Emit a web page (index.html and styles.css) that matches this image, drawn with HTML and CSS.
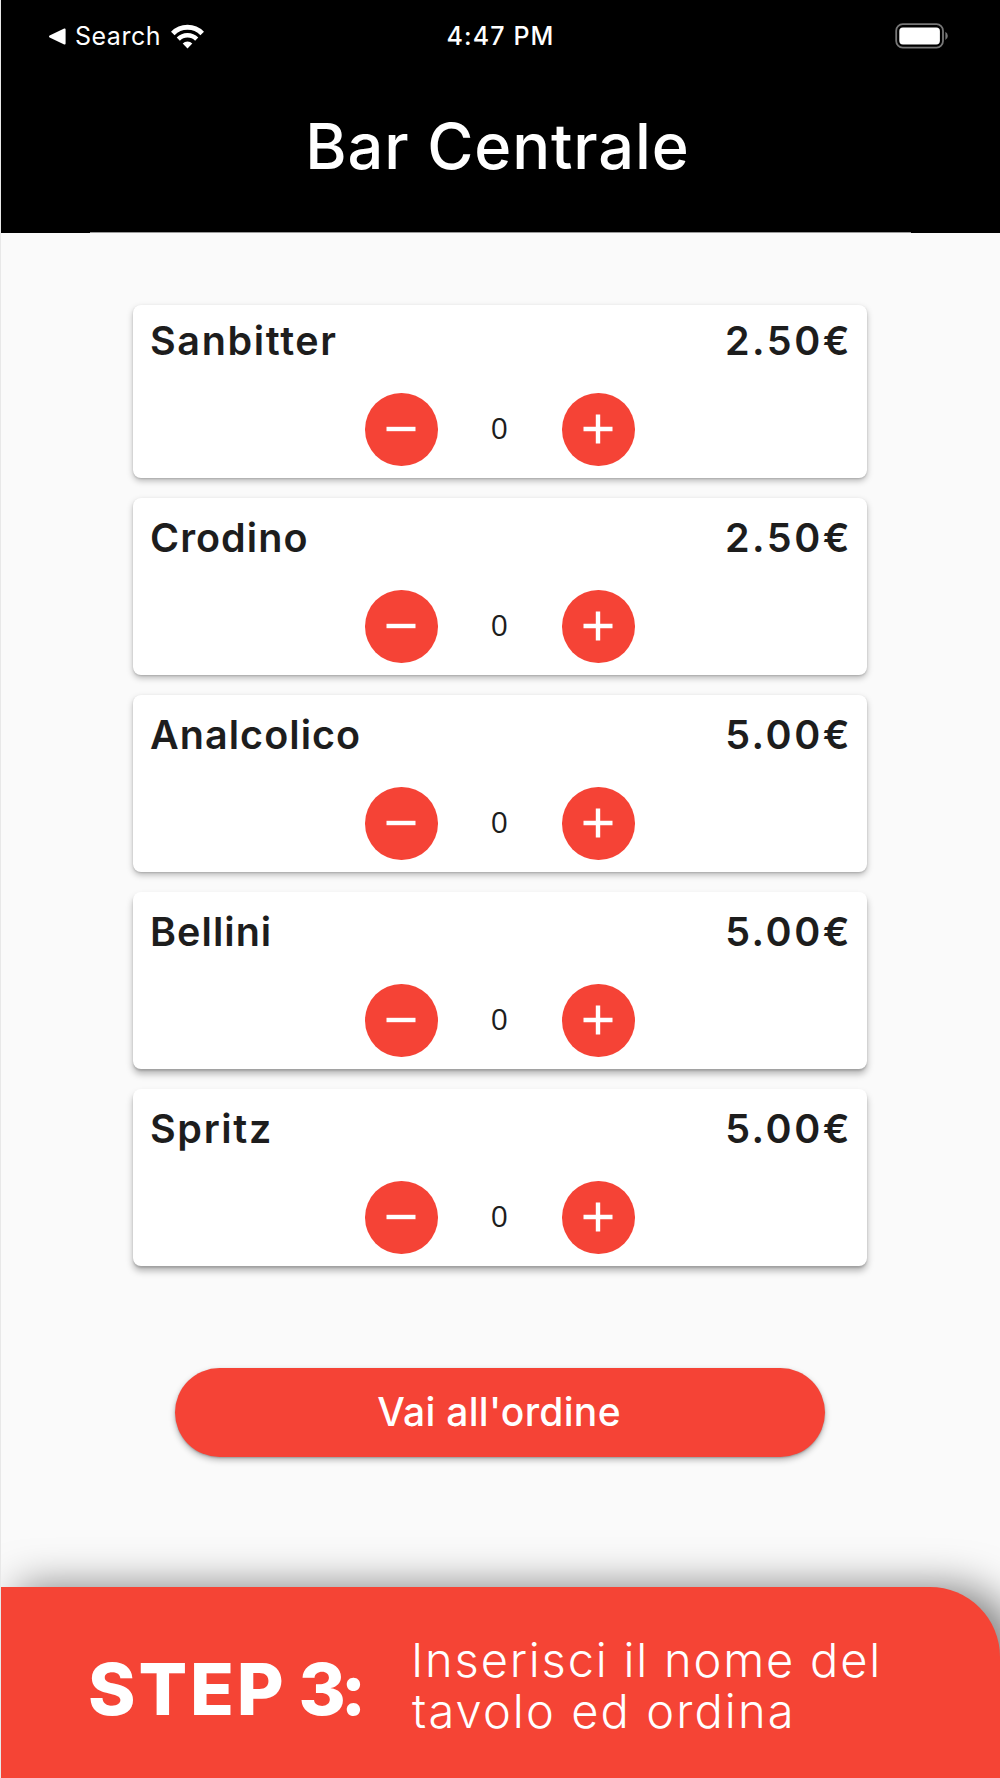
FILE: index.html
```
<!DOCTYPE html>
<html lang="it">
<head>
<meta charset="utf-8">
<title>Bar Centrale</title>
<link rel="stylesheet" href="styles.css">
</head>
<body>
<div class="screen">
  <header class="header">
    <div class="status">
      <div class="status-left">
        <svg class="back" viewBox="0 0 17 17"><path d="M.6 7.6 15.2.5Q16.6.1 16.6 1.5v14q0 1.4-1.4 1L.6 9.4q-1.2-.9 0-1.8z" fill="#fff"/></svg>
        <span class="search">Search</span>
        <svg class="wifi" viewBox="0 0 33 25" fill="none" stroke="#fff"><path d="M1.8 9.4a20.6 20.6 0 0 1 29.4 0" stroke-width="5"/><path d="M7.3 15.1a12.9 12.9 0 0 1 18.4 0" stroke-width="4.4"/><path d="M11.7 19.4a6.8 6.8 0 0 1 9.6 0L16.5 24.4z" fill="#fff" stroke="none"/></svg>
      </div>
      <span class="time">4:47 PM</span>
      <svg class="battery" viewBox="0 0 54 26"><rect x="1.2" y="1.2" width="46.8" height="23.4" rx="6.5" fill="none" stroke="#777" stroke-width="1.8"/><rect x="4.3" y="4.4" width="40.6" height="17" rx="3.6" fill="#fff"/><path d="M50.4 8.8q2.4 1.5 2.4 4.1t-2.4 4.1z" fill="#777"/></svg>
    </div>
    <h1 class="title">Bar Centrale</h1>
  </header>
  <main class="content">
    <ul class="menu">
      <li class="card card-first">
        <div class="card-row"><span class="name name-wide">Sanbitter</span><span class="price">2.50€</span></div>
        <div class="stepper"><button class="round"><svg viewBox="0 0 30 30"><path d="M.5 15h29"/></svg></button><span class="count">0</span><button class="round"><svg viewBox="0 0 30 30"><path d="M.5 15h29M15 .5v29"/></svg></button></div>
      </li>
      <li class="card">
        <div class="card-row"><span class="name">Crodino</span><span class="price">2.50€</span></div>
        <div class="stepper"><button class="round"><svg viewBox="0 0 30 30"><path d="M.5 15h29"/></svg></button><span class="count">0</span><button class="round"><svg viewBox="0 0 30 30"><path d="M.5 15h29M15 .5v29"/></svg></button></div>
      </li>
      <li class="card">
        <div class="card-row"><span class="name">Analcolico</span><span class="price">5.00€</span></div>
        <div class="stepper"><button class="round"><svg viewBox="0 0 30 30"><path d="M.5 15h29"/></svg></button><span class="count">0</span><button class="round"><svg viewBox="0 0 30 30"><path d="M.5 15h29M15 .5v29"/></svg></button></div>
      </li>
      <li class="card card-low">
        <div class="card-row"><span class="name">Bellini</span><span class="price">5.00€</span></div>
        <div class="stepper"><button class="round"><svg viewBox="0 0 30 30"><path d="M.5 15h29"/></svg></button><span class="count">0</span><button class="round"><svg viewBox="0 0 30 30"><path d="M.5 15h29M15 .5v29"/></svg></button></div>
      </li>
      <li class="card card-low">
        <div class="card-row"><span class="name name-wide">Spritz</span><span class="price">5.00€</span></div>
        <div class="stepper"><button class="round"><svg viewBox="0 0 30 30"><path d="M.5 15h29"/></svg></button><span class="count">0</span><button class="round"><svg viewBox="0 0 30 30"><path d="M.5 15h29M15 .5v29"/></svg></button></div>
      </li>
    </ul>
    <button class="order">Vai all'ordine</button>
  </main>
  <footer class="banner">
    <strong class="step"><span class="step-word">STEP</span> <span class="step-number">3:</span></strong>
    <p class="hint"><span class="hint-line">Inserisci il nome del</span> <span class="hint-line hint-end">tavolo ed ordina</span></p>
  </footer>
</div>
</body>
</html>
```
FILE: styles.css
```
* { box-sizing: border-box; }

body {
  margin: 0;
  background: #fafafa;
  color: #1d1d1d;
  font-family: Inter, "Liberation Sans", sans-serif;
}

button { border: 0; padding: 0; font: inherit; color: #fff; background: #f54336; }

.screen {
  display: flex;
  flex-direction: column;
  height: 1778px;
  border-left: 1px solid #e8e8e8;
  overflow: hidden;
}

.header {
  display: flex;
  flex-direction: column;
  flex: none;
  height: 233px;
  color: #fff;
  background: linear-gradient(#999, #999) 89px 100% / 821px 1px no-repeat #000;
}

.status {
  display: grid;
  grid-template-columns: 1fr auto 1fr;
  align-items: center;
  height: 72px;
  padding: 0 51px 0 48px;
  font-size: 25px;
}

.status-left { display: flex; align-items: center; }
.back { width: 17px; height: 17px; }
.search { margin-left: 9px; width: 96px; letter-spacing: .5px; }
.wifi { width: 33px; height: 25px; }
.time { font-weight: 500; letter-spacing: 1.1px; margin-left: 3px; }
.battery { width: 54px; height: 26px; justify-self: end; }

.title {
  margin: 0;
  padding-right: 6px;
  font-size: 63px;
  font-weight: 500;
  line-height: 148px;
  letter-spacing: .9px;
  text-align: center;
}

.content {
  display: flex;
  flex-direction: column;
  flex: none;
  height: 1354px;
  padding: 72px 132px 0;
}

.menu {
  display: flex;
  flex-direction: column;
  gap: 20.5px;
  margin: 0;
  padding: 0;
  list-style: none;
}

.card {
  display: flex;
  flex-direction: column;
  justify-content: flex-end;
  gap: 28px;
  width: 734px;
  height: 176.5px;
  padding: 0 15px 12px 17px;
  border-radius: 8px;
  background: #fff;
  box-shadow: 0 3px 6px rgba(0, 0, 0, .26), 0 1px 2px rgba(0, 0, 0, .14);
}

.card-first { height: 172.5px; }
.card-low { box-shadow: 0 5px 7px rgba(0, 0, 0, .28), 0 2px 2px rgba(0, 0, 0, .14); }

.card-row {
  display: flex;
  justify-content: space-between;
  font-size: 39.5px;
  font-weight: 600;
  line-height: 48px;
}

.name { letter-spacing: 1.05px; }
.name-wide { letter-spacing: 1.65px; }
.price { letter-spacing: 2.5px; }

.stepper { display: flex; align-items: center; padding-left: 215px; }

.round {
  display: flex;
  align-items: center;
  justify-content: center;
  width: 72.5px;
  height: 72.5px;
  border-radius: 50%;
}

.round svg { width: 30px; height: 30px; fill: none; stroke: #fff; stroke-width: 4.4; }

.count {
  width: 124.5px;
  padding: 0 1px 3px 0;
  font-size: 30px;
  font-weight: 400;
  font-family: "Open Sans", sans-serif;
  text-align: center;
}

.order {
  width: 650px;
  height: 89px;
  margin: 102px 0 0 42px;
  padding: 0 2px 1px 0;
  border-radius: 45px;
  font-size: 39px;
  font-weight: 500;
  letter-spacing: .3px;
  box-shadow: 0 3px 6px rgba(0, 0, 0, .28), 0 1px 2px rgba(0, 0, 0, .2);
}

.banner {
  display: flex;
  flex: 1;
  color: #fff;
  background: #f54435;
  border-top-right-radius: 70px;
  box-shadow: 18px 0 42px rgba(0, 0, 0, .5);
}

.step {
  width: 323px;
  margin-left: 87px;
  padding-top: 66px;
  font-size: 72px;
  font-weight: 800;
  line-height: 72px;
  word-spacing: -4px;
  white-space: nowrap;
}

.step-word { letter-spacing: 2.9px; }
.step-number { letter-spacing: -5px; }

.hint {
  margin: 0;
  padding-top: 47px;
  font-size: 47px;
  font-weight: 300;
  line-height: 51px;
}

.hint-line { display: block; letter-spacing: 1.8px; }
.hint-end { letter-spacing: 2.1px; margin-left: 1px; }
```
